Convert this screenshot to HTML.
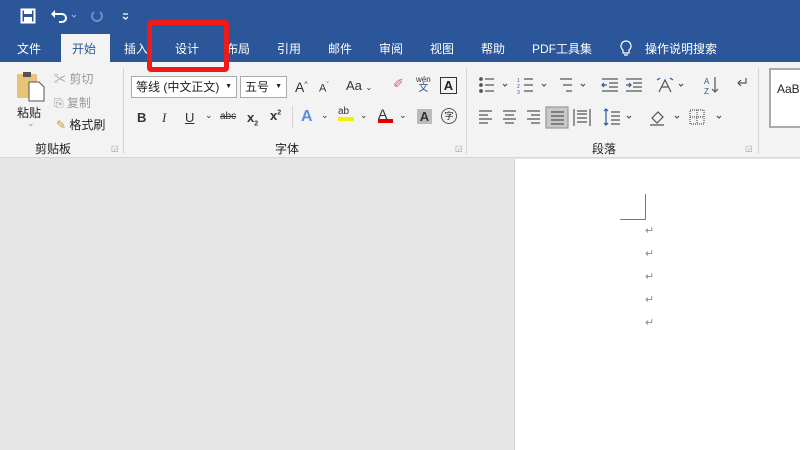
<!DOCTYPE html>
<html><head><meta charset="utf-8"><style>
*{margin:0;padding:0;box-sizing:border-box}
body{width:800px;height:450px;overflow:hidden;position:relative;background:#e6e6e6;font-family:"Liberation Sans","Noto Sans CJK SC",sans-serif;font-size:12px;color:#222}
.a{position:absolute;white-space:nowrap}
.tab{position:absolute;top:40px;color:#fff;font-size:12px}
.g{color:#999}
.ret{position:absolute;left:645px;color:#888;font-size:11px}
.sep{position:absolute;top:68px;width:1px;height:86px;background:#d4d4d4}
.ic{position:absolute;font-size:13px;color:#333}
.box{position:absolute;top:76px;height:22px;background:#fff;border:1px solid #aaa;padding:0 4px;font-size:12px;line-height:20px}
.box span{position:absolute;right:4px;font-size:7px;top:0}
</style></head><body>
<div class="a" style="left:0;top:0;width:800px;height:62px;background:#2b579a"></div>
<svg class="a" style="left:20px;top:8px" width="120" height="18" viewBox="0 0 120 18">
<rect x="1.5" y="1.5" width="13" height="13" fill="none" stroke="#fff" stroke-width="2"/><rect x="4" y="2" width="8" height="4" fill="#fff"/><rect x="4" y="9" width="8" height="5" fill="#fff"/>
<path d="M34 6 h8 a4 4 0 0 1 0 8 h-3" fill="none" stroke="#fff" stroke-width="2"/><path d="M31 6 l4 -4 v8z" fill="#fff"/>
<path d="M52 7 l2 2 l2 -2" stroke="#9fb5d8" fill="none"/>
<path d="M80 4 a5 5 0 1 1 -6 0" fill="none" stroke="#6f8fc0" stroke-width="2"/>
<path d="M103 6 h5 M103 9 l2.5 2 l2.5 -2" stroke="#fff" fill="none" stroke-width="1.3"/>
</svg>
<div class="a" style="left:61px;top:34px;width:49px;height:30px;background:#f3f3f3"></div>
<div class="tab" style="left:17px">文件</div>
<div class="tab" style="left:72px;color:#2b579a">开始</div>
<div class="tab" style="left:124px">插入</div>
<div class="tab" style="left:175px">设计</div>
<div class="tab" style="left:226px">布局</div>
<div class="tab" style="left:277px">引用</div>
<div class="tab" style="left:328px">邮件</div>
<div class="tab" style="left:379px">审阅</div>
<div class="tab" style="left:430px">视图</div>
<div class="tab" style="left:481px">帮助</div>
<div class="tab" style="left:532px">PDF工具集</div>
<svg class="a" style="left:619px;top:40px" width="14" height="18"><path d="M7 1 a5 5 0 0 1 3 9 v3 h-6 v-3 a5 5 0 0 1 3 -9z M5 15 h4" fill="none" stroke="#fff" stroke-width="1.2"/></svg>
<div class="tab" style="left:645px">操作说明搜索</div>
<div class="a" style="left:0;top:62px;width:800px;height:96px;background:#f3f3f3;border-bottom:1px solid #d6d6d6"></div>
<div class="a" style="left:147px;top:20px;width:82px;height:52px;border:5px solid #f01a1a;border-radius:4px"></div>
<svg class="a" style="left:16px;top:70px" width="30" height="32"><rect x="1" y="4" width="20" height="24" fill="#e8c477" rx="1"/><rect x="7" y="2" width="8" height="5" fill="#555"/><path d="M13 12 h10 l5 5 v14 h-15z" fill="#fff" stroke="#555"/></svg>
<div class="a" style="left:17px;top:104px;font-size:12px">粘贴</div>
<div class="a g" style="left:27px;top:118px;font-size:9px">⌄</div>
<div class="a g" style="left:54px;top:70px">✂ 剪切</div>
<div class="a g" style="left:54px;top:94px">⎘ 复制</div>
<div class="a" style="left:56px;top:116px"><span style="color:#c79a3a">✎</span> 格式刷</div>
<div class="a" style="left:35px;top:140px">剪贴板</div>
<div class="a g" style="left:111px;top:144px;font-size:8px">◲</div>
<div class="sep" style="left:123px"></div>
<div class="box" style="left:131px;width:106px">等线 (中文正文)<span>▼</span></div>
<div class="box" style="left:240px;width:47px">五号<span>▼</span></div>
<div class="ic" style="left:295px;top:79px;font-size:14px">A<sup style="font-size:7px">^</sup></div>
<div class="ic" style="left:319px;top:82px;font-size:11px">A<sup style="font-size:7px">ˇ</sup></div>
<div class="ic" style="left:346px;top:78px">Aa <span style="font-size:8px">⌄</span></div>
<div class="ic" style="left:393px;top:76px;color:#e05a7a">✐</div>
<div class="ic" style="left:416px;top:75px;font-size:8px;line-height:9px;text-align:center">wén<br><span style="color:#2b579a;font-size:10px">文</span></div>
<div class="a" style="left:440px;top:77px;width:17px;height:17px;border:1px solid #333;font-weight:bold;text-align:center;font-size:13px;line-height:15px">A</div>
<div class="ic" style="left:137px;top:110px;font-weight:bold">B</div>
<div class="ic" style="left:162px;top:110px;font-style:italic;font-family:'Liberation Serif'">I</div>
<div class="ic" style="left:185px;top:110px;text-decoration:underline">U</div>
<div class="ic" style="left:205px;top:110px;font-size:9px">⌄</div>
<div class="ic" style="left:220px;top:111px;font-size:10px;text-decoration:line-through">abc</div>
<div class="ic" style="left:247px;top:110px;font-weight:bold">x<sub style="font-size:7px">2</sub></div>
<div class="ic" style="left:270px;top:108px;font-weight:bold">x<sup style="font-size:7px">2</sup></div>
<div class="sep" style="left:292px;top:106px;height:22px"></div>
<div class="ic" style="left:301px;top:108px;font-size:16px;color:#5b8fd6;font-weight:bold">A</div>
<div class="ic" style="left:321px;top:110px;font-size:9px">⌄</div>
<div class="ic" style="left:338px;top:106px;font-size:10px">ab<div style="width:16px;height:4px;background:#f5f000"></div></div>
<div class="ic" style="left:360px;top:110px;font-size:9px">⌄</div>
<div class="ic" style="left:378px;top:106px;font-size:14px">A<div style="width:15px;height:4px;background:#e00000;margin-top:-3px"></div></div>
<div class="ic" style="left:399px;top:110px;font-size:9px">⌄</div>
<div class="a" style="left:417px;top:109px;width:15px;height:15px;background:#bbb;font-weight:bold;text-align:center;font-size:13px;line-height:15px;color:#333">A</div>
<div class="a" style="left:441px;top:108px;width:16px;height:16px;border:1px solid #555;border-radius:50%;font-size:9px;text-align:center;line-height:14px">字</div>
<div class="a" style="left:275px;top:140px">字体</div>
<div class="a g" style="left:455px;top:144px;font-size:8px">◲</div>
<div class="sep" style="left:466px"></div>
<svg class="a" style="left:476px;top:74px" width="290" height="56" fill="none" stroke="#555" stroke-width="1.2">
<g><circle cx="5" cy="5" r="1.3" fill="#555"/><circle cx="5" cy="11" r="1.3" fill="#555"/><circle cx="5" cy="17" r="1.3" fill="#555"/><path d="M9 5h9M9 11h9M9 17h9"/><path d="M27 10l2 2 2-2"/></g>
<g transform="translate(39,0)"><path d="M9 5h9M9 11h9M9 17h9"/><path d="M27 10l2 2 2-2"/><text x="2" y="8" font-size="5" fill="#2b579a" stroke="none">1</text><text x="2" y="14" font-size="5" fill="#2b579a" stroke="none">2</text><text x="2" y="20" font-size="5" fill="#2b579a" stroke="none">3</text></g>
<g transform="translate(78,0)"><path d="M6 5h12M9 11h9M12 17h6"/><path d="M27 10l2 2 2-2"/></g>
<g transform="translate(124,0)"><path d="M2 5h16M9 9h9M9 13h9M2 17h16" stroke="#555"/><path d="M7 11h-5m2-2-2 2 2 2" stroke="#2b579a"/></g>
<g transform="translate(148,0)"><path d="M2 5h16M9 9h9M9 13h9M2 17h16"/><path d="M2 11h5m-2-2 2 2-2 2" stroke="#2b579a"/></g>
<g transform="translate(180,0)"><path d="M3 18l6-12 6 12M5 13h8"/><path d="M1 6l3-2M17 6l-3-2" stroke="#2b579a"/><path d="M23 10l2 2 2-2"/></g>
<g transform="translate(226,0)"><text x="2" y="10" font-size="8" fill="#2b579a" stroke="none">A</text><text x="2" y="20" font-size="8" fill="#2b579a" stroke="none">Z</text><path d="M13 3v15m-3-3 3 3 3-3"/></g>
<g transform="translate(258,0)"><path d="M12 4v5h-8m3-3-3 3 3 3"/></g>
<g transform="translate(0,32)"><path d="M3 5h13M3 9h9M3 13h13M3 17h9"/></g>
<g transform="translate(24,32)"><path d="M3 5h13M5 9h9M3 13h13M5 17h9"/></g>
<g transform="translate(48,32)"><path d="M3 5h13M7 9h9M3 13h13M7 17h9"/></g>
<rect x="70" y="33" width="22" height="21" fill="#c8c8c8" stroke="#999"/>
<g transform="translate(72,32)"><path d="M3 6h13M3 10h13M3 14h13M3 18h13"/></g>
<g transform="translate(96,32)"><path d="M2 3v17M18 3v17M5 8h10M5 12h10M5 16h10M5 5h10" /></g>
<g transform="translate(126,32)"><path d="M4 3v16m-2-14 2-2 2 2m-4 12 2 2 2-2" stroke="#2b579a"/><path d="M9 6h9M9 10h9M9 14h9M9 18h9"/><path d="M25 10l2 2 2-2"/></g>
<g transform="translate(172,32)"><path d="M4 12l6-6 5 5-6 6zM2 19h14"/><path d="M27 10l2 2 2-2"/></g>
<g transform="translate(212,32)"><rect x="2" y="4" width="14" height="14" stroke-dasharray="1 1"/><path d="M9 4v14M2 11h14" stroke-dasharray="1 1"/><path d="M29 10l2 2 2-2"/></g>
</svg>
<div class="a" style="left:592px;top:140px">段落</div>
<div class="a g" style="left:745px;top:144px;font-size:8px">◲</div>
<div class="sep" style="left:758px"></div>
<div class="a" style="left:769px;top:68px;width:40px;height:60px;background:#fff;border:2px solid #aaa;padding:12px 0 0 6px;font-size:12px">AaB</div>
<div class="a" style="left:514px;top:159px;width:286px;height:291px;background:#fff;border-left:1px solid #d0d0d0"></div>
<div class="a" style="left:645px;top:194px;width:1px;height:26px;background:#777"></div>
<div class="a" style="left:620px;top:219px;width:26px;height:1px;background:#777"></div>
<div class="ret" style="top:224px">↵</div>
<div class="ret" style="top:247px">↵</div>
<div class="ret" style="top:270px">↵</div>
<div class="ret" style="top:293px">↵</div>
<div class="ret" style="top:316px">↵</div>
</body></html>
